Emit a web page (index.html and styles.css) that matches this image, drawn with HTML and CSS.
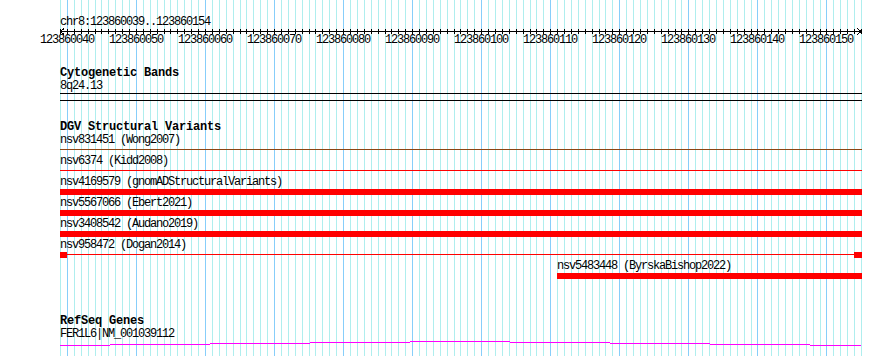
FILE: index.html
```html
<!DOCTYPE html>
<html>
<head>
<meta charset="utf-8">
<title>Genome browser</title>
<link rel="stylesheet" href="styles.css">
<script src="script.js" defer></script>
</head>
<body>
<div class="page">
  <svg id="grid" class="grid" width="890" height="356" shape-rendering="crispEdges"></svg>
  <div class="content">
    <section class="ruler">
      <div class="ruler-label">chr8:123860039..123860154</div>
      <svg id="axis" class="axis" width="802" height="7" shape-rendering="crispEdges">
        <line x1="0" y1="3.5" x2="802" y2="3.5" stroke="#000" stroke-width="1"/>
        <polyline points="4,0.5 0.5,3.5 4,6.5" fill="none" stroke="#000" stroke-width="1"/>
        <polyline points="797,0.5 801.5,3.5 797,6.5" fill="none" stroke="#000" stroke-width="1"/>
        <g id="ticks"></g>
      </svg>
      <div class="tick-labels">
        <span>123860040</span><span>123860050</span><span>123860060</span><span>123860070</span>
        <span>123860080</span><span>123860090</span><span>123860100</span><span>123860110</span>
        <span>123860120</span><span>123860130</span><span>123860140</span><span>123860150</span>
      </div>
    </section>

    <section class="track cyto">
      <div class="track-title">Cytogenetic Bands</div>
      <div class="label">8q24.13</div>
      <div class="band"></div>
    </section>

    <section class="track dgv">
      <div class="track-title">DGV Structural Variants</div>
      <div class="feature">
        <div class="label">nsv831451 (Wong2007)</div>
        <div class="glyph"><div class="line brown"></div></div>
      </div>
      <div class="feature">
        <div class="label">nsv6374 (Kidd2008)</div>
        <div class="glyph"><div class="line"></div></div>
      </div>
      <div class="feature">
        <div class="label">nsv4169579 (gnomADStructuralVariants)</div>
        <div class="glyph"><div class="bar"></div></div>
      </div>
      <div class="feature">
        <div class="label">nsv5567066 (Ebert2021)</div>
        <div class="glyph"><div class="bar"></div></div>
      </div>
      <div class="feature">
        <div class="label">nsv3408542 (Audano2019)</div>
        <div class="glyph"><div class="bar"></div></div>
      </div>
      <div class="feature">
        <div class="label">nsv958472 (Dogan2014)</div>
        <div class="glyph ends">
          <div class="end end-left"></div>
          <div class="line mid"></div>
          <div class="end end-right"></div>
        </div>
      </div>
      <div class="feature" style="margin-left:497px">
        <div class="label">nsv5483448 (ByrskaBishop2022)</div>
        <div class="glyph"><div class="bar"></div></div>
      </div>
    </section>

    <section class="track refseq">
      <div class="track-title">RefSeq Genes</div>
      <div class="label">FER1L6|NM_001039112</div>
      <svg class="gene" width="802" height="5" shape-rendering="crispEdges">
        <path d="M0 4.5H50M50 3.5H150M150 2.5H250M250 1.5H350M350 0.5H450M450 1.5H550M550 2.5H650M650 3.5H750M750 4.5H801" fill="none" stroke="#ff00ff" stroke-width="1"/>
      </svg>
    </section>
  </div>
</div>
</body>
</html>
```

FILE: styles.css
```css
html, body {
  margin: 0;
  padding: 0;
  background: #ffffff;
}

body {
  font-family: "Liberation Mono", "DejaVu Sans Mono", monospace;
  font-size: 12px;
  line-height: 13px;
  letter-spacing: -1.2px;
  color: #000000;
}

.page {
  position: relative;
  width: 890px;
  height: 356px;
  overflow: hidden;
}

.grid {
  position: absolute;
  left: 0;
  top: 0;
  z-index: 0;
}

.content {
  position: relative;
  z-index: 1;
  width: 802px;
  padding-left: 60px;
}

.ruler {
  padding-top: 16px;
}

.ruler-label,
.label,
.track-title {
  height: 13px;
  white-space: pre;
}

.axis {
  display: block;
  margin-top: -1px;
}

.tick-labels {
  display: flex;
  gap: 15px;
  margin-left: -20px;
  margin-top: -1px;
  height: 13px;
}

.tick-labels span {
  width: 54px;
  flex: none;
}

.track-title {
  font-weight: bold;
  letter-spacing: -0.2px;
}

.cyto {
  margin-top: 20px;
}

.band {
  height: 6px;
  border-top: 1px solid #000;
  border-bottom: 1px solid #000;
}

.dgv {
  margin-top: 20px;
}

.glyph {
  display: flow-root;
  height: 8px;
}

.bar {
  height: 6px;
  background: #ff0000;
}

.line {
  height: 1px;
  margin-top: 2px;
  background: #ff0000;
}

.line.brown {
  background: #8b4513;
}

.glyph.ends {
  display: flex;
  align-items: flex-start;
}

.end {
  height: 6px;
  background: #ff0000;
  flex: none;
}

.end-left {
  width: 7px;
}

.end-right {
  width: 8px;
}

.mid {
  flex: 1;
}

.refseq {
  margin-top: 34px;
}

.gene {
  display: block;
}
```

FILE: script.js
```js
(function () {
  var ns = "http://www.w3.org/2000/svg";
  var grid = document.getElementById("grid");
  var ticks = document.getElementById("ticks");
  var x0 = 60, scale = 6.905, bases = 116;
  for (var i = 0; i <= bases; i++) {
    var x = Math.round(x0 + i * scale);
    var major = (i % 10) === 1;
    var gl = document.createElementNS(ns, "line");
    gl.setAttribute("x1", x + 0.5);
    gl.setAttribute("x2", x + 0.5);
    gl.setAttribute("y1", 0);
    gl.setAttribute("y2", 356);
    gl.setAttribute("stroke", major ? "#87cefa" : "#afeeee");
    gl.setAttribute("stroke-width", 1);
    grid.appendChild(gl);

    var t = document.createElementNS(ns, "line");
    var tx = x - x0 + 0.5;
    t.setAttribute("x1", tx);
    t.setAttribute("x2", tx);
    t.setAttribute("y1", 1);
    t.setAttribute("y2", 6);
    t.setAttribute("stroke", "#000");
    t.setAttribute("stroke-width", 1);
    ticks.appendChild(t);
  }
})();
```
